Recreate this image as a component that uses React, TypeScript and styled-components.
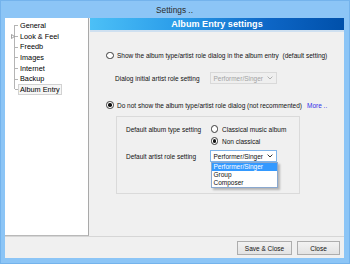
import React from "react"
import styled, { createGlobalStyle } from "styled-components"

const GlobalStyle = createGlobalStyle`
	html, body {
		margin: 0;
		padding: 0;
	}
	body {
		background: #8cc5f6;
		font-family: "Liberation Sans", Arial, sans-serif;
	}
`

const Frame = styled.div`
	width: 350px;
	height: 264px;
	box-sizing: border-box;
	background: #8cc5f6;
	border: 1px solid #74b3ec;
	display: flex;
	flex-direction: column;
	padding: 0 5px 5px 4px;
`

const TitleBar = styled.div`
	height: 17px;
	display: flex;
	align-items: center;
	justify-content: center;
	font-size: 8.3px;
	color: #2b2b2b;
`

const Client = styled.div`
	flex: 1;
	display: flex;
	flex-direction: column;
	background: #f0f0f0;
`

const Main = styled.div`
	flex: 1;
	display: flex;
	min-height: 0;
`

const Tree = styled.div`
	width: 84px;
	box-sizing: border-box;
	background: #fff;
	border-right: 1px solid #a9a9a9;
	border-bottom: 1px solid #b9b9b9;
	margin-right: 1px;
	padding-top: 2px;
	font-size: 7.3px;
	color: #000;
`

const TreeItem = styled.div<{ $first?: boolean; $last?: boolean }>`
	position: relative;
	height: 10.7px;
	display: flex;
	align-items: center;
	padding-left: 13px;

	&::before {
		content: "";
		position: absolute;
		left: 9px;
		top: ${(p) => (p.$first ? "50%" : "0")};
		bottom: ${(p) => (p.$last ? "50%" : "0")};
		border-left: 1px solid #b4b4b4;
	}
	&::after {
		content: "";
		position: absolute;
		left: 10px;
		top: 50%;
		width: 3px;
		border-top: 1px solid #b4b4b4;
	}
`

const TreeLabel = styled.span<{ $selected?: boolean }>`
	padding: 0 1px;
	line-height: 9px;
	border: 1px solid ${(p) => (p.$selected ? "#d2d2d2" : "transparent")};
	background: ${(p) => (p.$selected ? "#f6f6f6" : "transparent")};
`

const Expander = styled.svg`
	position: absolute;
	left: 6px;
	top: 3px;
	z-index: 1;
`

const Panel = styled.div`
	flex: 1;
	display: flex;
	flex-direction: column;
`

const Header = styled.div`
	height: 12px;
	display: flex;
	align-items: center;
	justify-content: center;
	background: linear-gradient(to right, #4cc0f7 0%, #2a9ce9 35%, #0d66c6 70%, #0050aa 100%);
	border-bottom: 2px solid #cfe0f0;
	color: #fff;
	font-weight: bold;
	font-size: 9.1px;
`

const Content = styled.div`
	display: flex;
	flex-direction: column;
	padding-left: 16px;
	font-size: 6.5px;
	color: #111;
	white-space: nowrap;
`

const RadioRow = styled.div<{ $top: number; $indent?: number }>`
	display: flex;
	align-items: center;
	height: 10px;
	margin-top: ${(p) => p.$top}px;
	padding-left: ${(p) => p.$indent || 0}px;
	gap: 3.5px;
`

const Radio = styled.span<{ $checked?: boolean }>`
	width: 7.5px;
	height: 7.5px;
	box-sizing: border-box;
	border-radius: 50%;
	border: 1px solid #3a3a3a;
	background: #fff;
	flex-shrink: 0;
	display: flex;
	align-items: center;
	justify-content: center;

	&::after {
		content: "";
		width: 3.5px;
		height: 3.5px;
		border-radius: 50%;
		background: ${(p) => (p.$checked ? "#111" : "transparent")};
	}
`

const MoreLink = styled.span`
	color: #2f2fe8;
	margin-left: 1.5px;
`

const SettingRow = styled.div<{ $top: number; $indent: number; $labelWidth: number }>`
	display: flex;
	align-items: center;
	margin-top: ${(p) => p.$top}px;
	padding-left: ${(p) => p.$indent}px;

	& > span:first-child {
		width: ${(p) => p.$labelWidth}px;
		flex-shrink: 0;
	}
`

const Select = styled.div<{ $disabled?: boolean }>`
	position: relative;
	width: 67px;
	height: ${(p) => (p.$disabled ? 12 : 11.5)}px;
	box-sizing: border-box;
	display: flex;
	align-items: center;
	justify-content: space-between;
	padding: 0 3px 0 2.5px;
	border: 1px solid ${(p) => (p.$disabled ? "#d9d9d9" : "#7eb4ea")};
	background: ${(p) => (p.$disabled ? "#efefef" : "#fff")};
	color: ${(p) => (p.$disabled ? "#a3a3a3" : "#111")};
`

const DropList = styled.div`
	position: absolute;
	left: 0;
	top: 10.5px;
	width: 67px;
	box-sizing: border-box;
	border: 1px solid #8aa8cf;
	background: #fff;
	box-shadow: 2px 2px 2px rgba(0, 0, 0, 0.25);
	z-index: 5;
`

const DropItem = styled.div<{ $active?: boolean }>`
	height: 8px;
	display: flex;
	align-items: center;
	padding-left: 1.5px;
	background: ${(p) => (p.$active ? "#3399ff" : "transparent")};
	color: ${(p) => (p.$active ? "#fff" : "#111")};
`

const GroupBox = styled.div`
	margin: 6px 0 0 10px;
	width: 184px;
	height: 78px;
	box-sizing: border-box;
	border: 1px solid #dadada;
	padding: 7px 0 0 9px;
	display: flex;
	flex-direction: column;
`

const GroupLine = styled.div<{ $top: number; $indent?: number }>`
	display: flex;
	align-items: center;
	height: 10px;
	margin-top: ${(p) => p.$top}px;
	padding-left: ${(p) => p.$indent || 0}px;

	& > span:first-child {
		width: 84px;
		flex-shrink: 0;
	}
`

const Option = styled.div`
	display: flex;
	align-items: center;
	gap: 4px;
	margin-left: 0.5px;
`

const ButtonBar = styled.div`
	height: 22px;
	box-sizing: border-box;
	border-top: 1px solid #d6d6d6;
	display: flex;
	justify-content: flex-end;
	align-items: flex-start;
	gap: 5px;
	padding: 4px 4px 0 0;
`

const Button = styled.button<{ $width: number }>`
	width: ${(p) => p.$width}px;
	height: 14px;
	box-sizing: border-box;
	padding: 0;
	border: 1px solid #adadad;
	background: linear-gradient(#f2f2f2, #e3e3e3);
	font-family: "Liberation Sans", Arial, sans-serif;
	font-size: 6.5px;
	color: #111;
`

const Chevron = ({ color }: { color: string }) => (
	<svg width="6" height="4" viewBox="0 0 6 4">
		<path d="M0.6 0.6 L3 3 L5.4 0.6" fill="none" stroke={color} strokeWidth="1" />
	</svg>
)

const treeItems = ["General", "Look & Feel", "Freedb", "Images", "Internet", "Backup", "Album Entry"]

const App = () => {
	return (
		<>
			<GlobalStyle />
			<Frame>
				<TitleBar>Settings ..</TitleBar>
				<Client>
					<Main>
						<Tree>
							{treeItems.map((name, i) => (
								<TreeItem key={name} $first={i === 0} $last={i === treeItems.length - 1}>
									{name === "Look & Feel" && (
										<Expander width="4" height="5" viewBox="0 0 4 5">
											<path d="M0.5 0.5 L3.5 2.5 L0.5 4.5 Z" fill="#fff" stroke="#8a8a8a" strokeWidth="0.8" />
										</Expander>
									)}
									<TreeLabel $selected={name === "Album Entry"}>{name}</TreeLabel>
								</TreeItem>
							))}
						</Tree>
						<Panel>
							<Header>Album Entry settings</Header>
							<Content>
								<RadioRow $top={18.5}>
									<Radio />
									<span>Show the album type/artist role dialog in the album entry&nbsp; (default setting)</span>
								</RadioRow>
								<SettingRow $top={11.5} $indent={9} $labelWidth={95}>
									<span>Dialog initial artist role setting</span>
									<Select $disabled>
										<span>Performer/Singer</span>
										<Chevron color="#b0b0b0" />
									</Select>
								</SettingRow>
								<RadioRow $top={16}>
									<Radio $checked />
									<span>Do not show the album type/artist role dialog (not recommented)</span>
									<MoreLink>More ..</MoreLink>
								</RadioRow>
								<GroupBox>
									<GroupLine $top={0}>
										<span>Default album type setting</span>
										<Option>
											<Radio />
											<span>Classical music album</span>
										</Option>
									</GroupLine>
									<GroupLine $top={2} $indent={84}>
										<Option>
											<Radio $checked />
											<span>Non classical</span>
										</Option>
									</GroupLine>
									<GroupLine $top={5}>
										<span>Default artist role setting</span>
										<Select>
											<span>Performer/Singer</span>
											<Chevron color="#333" />
											<DropList>
												<DropItem $active>Performer/Singer</DropItem>
												<DropItem>Group</DropItem>
												<DropItem>Composer</DropItem>
											</DropList>
										</Select>
									</GroupLine>
								</GroupBox>
							</Content>
						</Panel>
					</Main>
					<ButtonBar>
						<Button $width={55}>Save &amp; Close</Button>
						<Button $width={43}>Close</Button>
					</ButtonBar>
				</Client>
			</Frame>
		</>
	)
}

export default App
